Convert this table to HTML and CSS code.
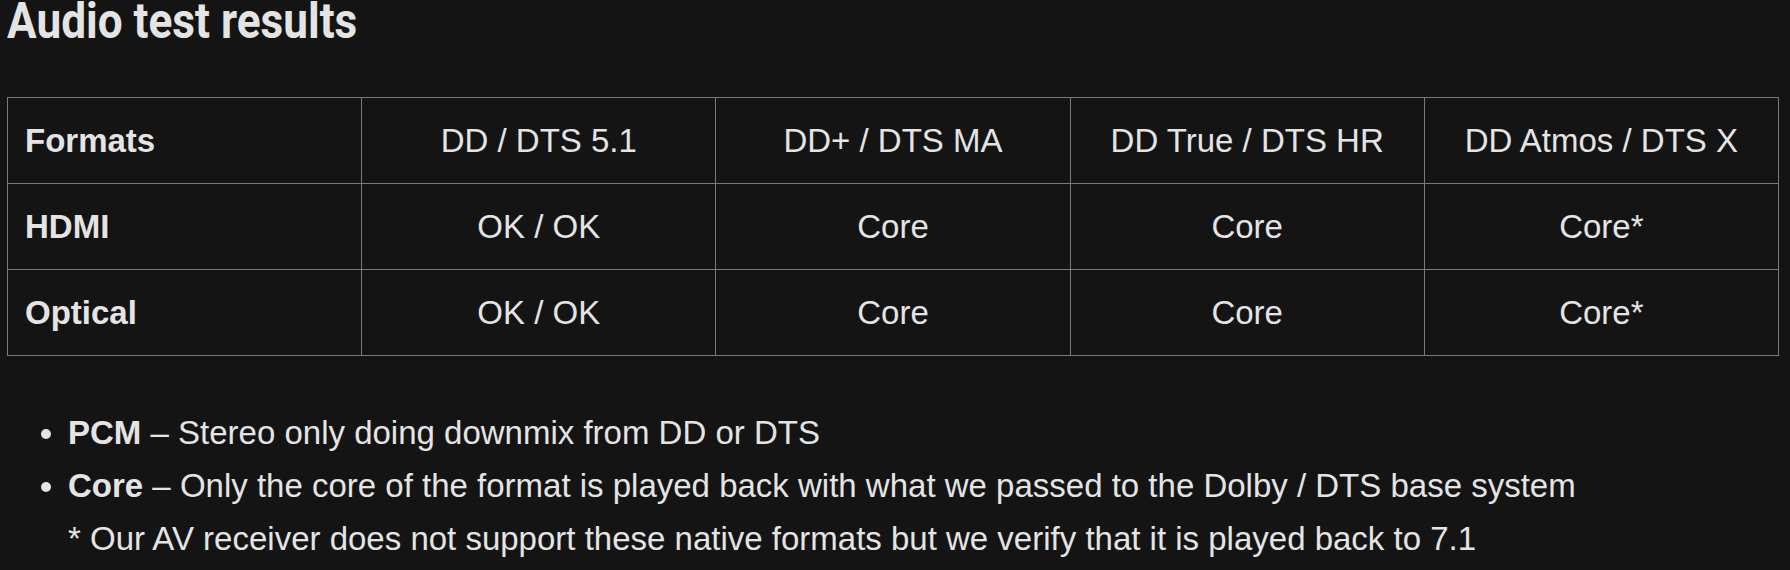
FILE: index.html
```html
<!DOCTYPE html>
<html lang="en">
<head>
<meta charset="utf-8">
<title>Audio test results</title>
<link rel="stylesheet" href="styles.css">
</head>
<body>
<main class="page">
  <h2 class="title">Audio test results</h2>
  <table class="results">
    <tr>
      <th class="label">Formats</th>
      <td>DD / DTS 5.1</td>
      <td>DD+ / DTS MA</td>
      <td>DD True / DTS HR</td>
      <td>DD Atmos / DTS X</td>
    </tr>
    <tr>
      <th class="label">HDMI</th>
      <td>OK / OK</td>
      <td>Core</td>
      <td>Core</td>
      <td>Core*</td>
    </tr>
    <tr>
      <th class="label">Optical</th>
      <td>OK / OK</td>
      <td>Core</td>
      <td>Core</td>
      <td>Core*</td>
    </tr>
  </table>
  <ul class="notes">
    <li><strong>PCM</strong> – Stereo only doing downmix from DD or DTS</li>
    <li><strong>Core</strong> – Only the core of the format is played back with what we passed to the Dolby / DTS base system</li>
    <li class="footnote">* Our AV receiver does not support these native formats but we verify that it is played back to 7.1</li>
  </ul>
</main>
</body>
</html>
```

FILE: styles.css
```css
html, body {
  margin: 0;
  padding: 0;
  background: #141414;
}

body {
  color: #e4e4e4;
  font-family: "Liberation Sans", Arial, sans-serif;
  font-size: 33px;
  overflow: hidden;
}

.page {
  padding: 0 11px 0 7px;
}

.title {
  margin: -7px 0 0;
  font-family: Roboto, "Liberation Sans", sans-serif;
  font-weight: 700;
  font-size: 50px;
  line-height: 56px;
  color: #e4e4e4;
  transform: scaleX(0.883);
  transform-origin: left center;
  white-space: nowrap;
}

.results {
  margin-top: 48px;
  width: 100%;
  table-layout: fixed;
  border-collapse: collapse;
}

.results th,
.results td {
  border: 1px solid #7a7a7a;
  height: 85px;
  padding: 0 17px;
  font-size: 33px;
  text-align: center;
  vertical-align: middle;
  font-weight: 400;
}

.results th.label {
  text-align: left;
  font-weight: 700;
}

.notes {
  margin: 50px 0 0;
  padding: 0 0 0 61px;
  line-height: 53px;
}

.notes strong {
  font-weight: 700;
}

.notes .footnote {
  list-style: none;
}
```
